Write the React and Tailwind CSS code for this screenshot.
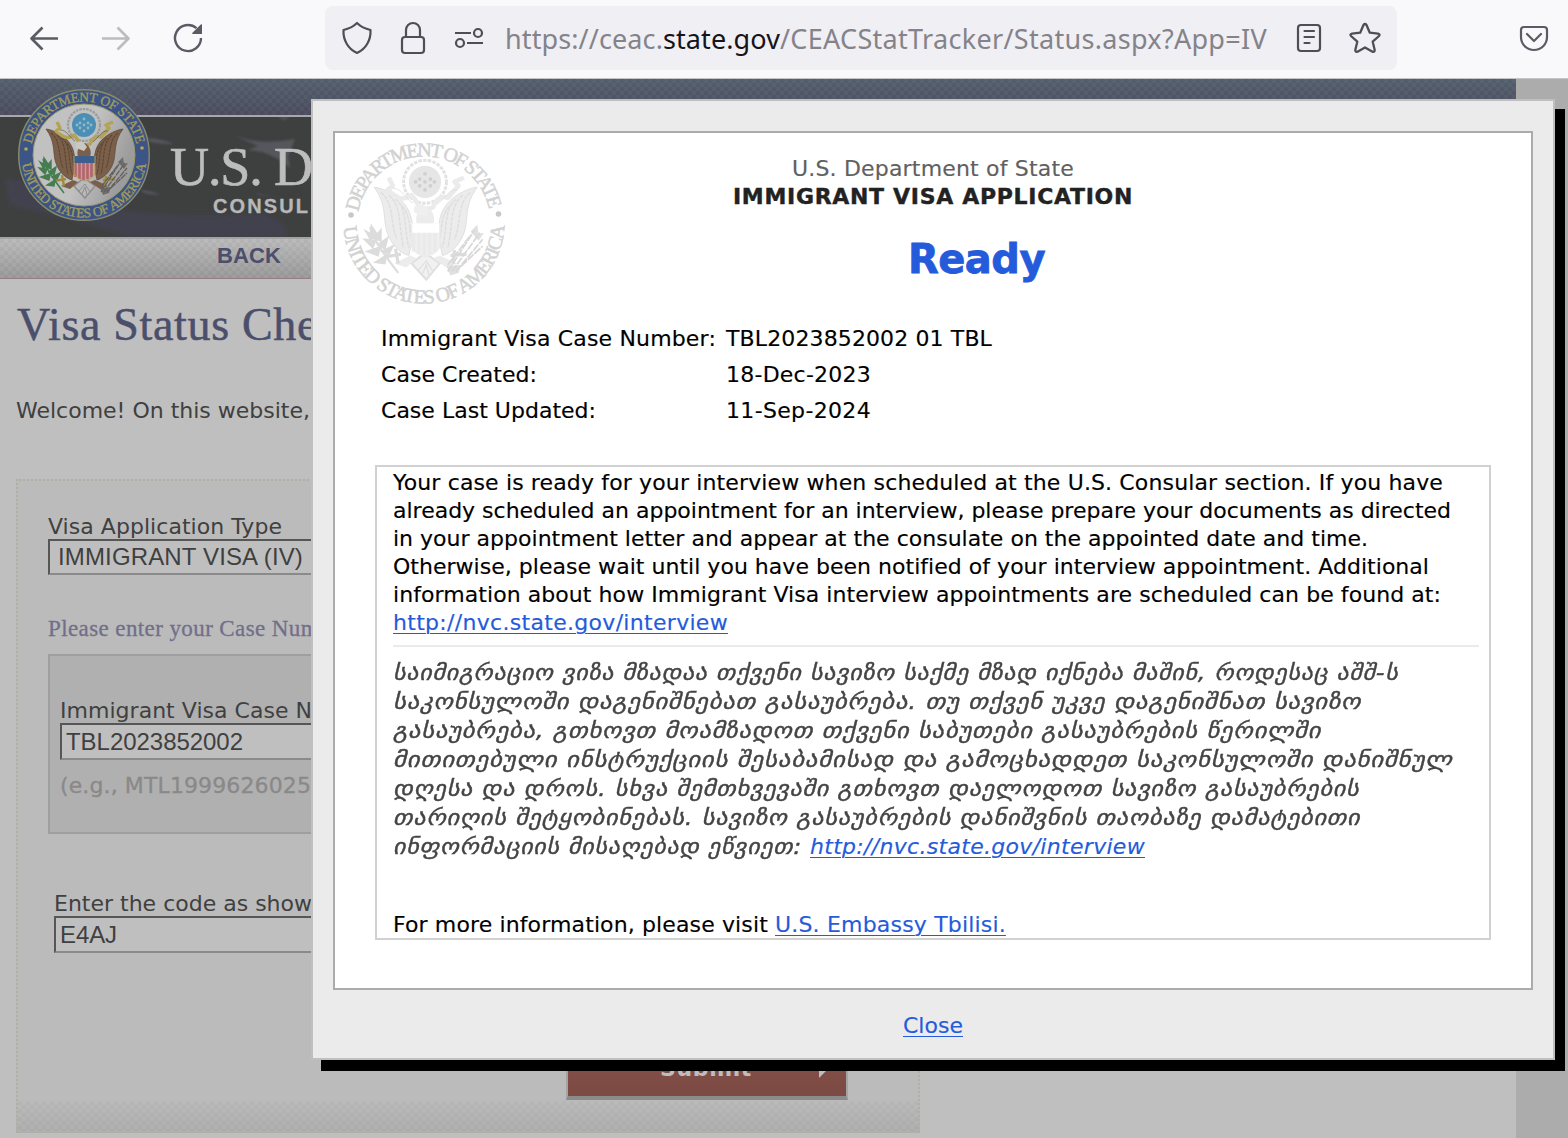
import { useLayoutEffect, useRef, useState } from "react";

// A single line of text whose tracking is adjusted to fill a given width.
function Fit({ w, children, className = "" }) {
  const ref = useRef(null);
  const [spacing, setSpacing] = useState(0);
  useLayoutEffect(() => {
    const natural = ref.current.getBoundingClientRect().width;
    setSpacing((w - natural) / ref.current.textContent.length);
  }, [w]);
  return (
    <span ref={ref} className={"inline-block whitespace-pre " + className} style={{ letterSpacing: spacing + "px" }}>
      {children}
    </span>
  );
}

// A single line whose glyphs are widened to fill a given width.
function Stretch({ w, children }) {
  const ref = useRef(null);
  const [scale, setScale] = useState(1);
  useLayoutEffect(() => {
    setScale(w / ref.current.offsetWidth);
  }, [w]);
  return (
    <span ref={ref} className="inline-block origin-left whitespace-pre tracking-[0.6px] [-webkit-text-stroke:0.4px_#444]" style={{ transform: `scaleX(${scale})` }}>
      {children}
    </span>
  );
}

const COLOR = {
  wing: "#7b5f49", wingLine: "#5b4737", glory: "#4c8fb5", star: "#8fb9c9", cloud: "#9a9c9d", scroll: "#b3a354",
  chief: "#3c5f8f", stripeA: "#b5646b", stripeB: "#c3a0a0", tail: "#b9b9b9", tailLine: "#8e8e8e",
  olive: "#467d50", arrow: "#62605f", head: "#c9c8c2", leg: "#a08a3c",
};
const GRAY = {
  wing: "#ececec", wingLine: "#dedede", glory: "#e6e6e6", star: "#cfcfcf", cloud: "#e2e2e2", scroll: "#ebebeb",
  chief: "#ffffff", stripeA: "#eaeaea", stripeB: "#efefef", tail: "#f1f1f1", tailLine: "#e0e0e0",
  olive: "#dcdcdc", arrow: "#d8d8d8", head: "#efefef", leg: "#dcdcdc",
};

function Wing({ c }) {
  return (
    <g>
      <path d="M-38-26C-30-25-18-19-13-10C-10-5-9 2-9 10L-12 25C-20 23-27 14-29 5C-31-4-29-14-38-26Z" fill={c.wing} stroke={c.wingLine} strokeWidth=".7" />
      <path d="M-33-22C-23-15-26 2-21 13M-27-20C-17-12-20 3-16 19M-22-17C-13-10-16 4-12 19M-17-12C-10-3-12 6-10 12" fill="none" stroke={c.wingLine} strokeWidth="1.1" strokeDasharray="3 .7" />
    </g>
  );
}

function Eagle({ c }) {
  const stars = [[0, -30], [-4, -32], [4, -32], [-4, -27], [4, -27], [0, -36], [0, -24], [-7, -30], [7, -30]];
  return (
    <g>
      <path d="M-10 31L0 23L11 31L1 43Z" fill={c.tail} stroke={c.tailLine} strokeWidth="1.5" />
      <path d="M-5 36L1 29L6 37M-2 39L1 32L3 40" fill="none" stroke={c.tailLine} strokeWidth="1" />
      <circle cy="-30" r="16" fill="none" stroke={c.cloud} strokeWidth="2.2" strokeDasharray="2.6 .9" />
      <circle cy="-30" r="12" fill={c.glory} />
      {stars.map(([x, y], i) => <circle key={i} cx={x} cy={y} r="1.4" fill={c.star} />)}
      <Wing c={c} />
      <g transform="translate(1 0) scale(-1 1)"><Wing c={c} /></g>
      <path d="M-27-33L-24-27L-28-24C-21-18-17-15-10-20C-5-15-5-10-1-9L6-11C8-17 13-20 17-18L25-27L22-30L29-33" fill="none" stroke={c.scroll} strokeWidth="3.4" strokeLinejoin="round" />
      <path d="M-24-25C-18-26-13-16-9-14M24-24C18-25 14-17 9-13" fill="none" stroke={c.wingLine} strokeWidth=".6" />
      <path d="M-11 25L-23 31L-14 34L-6 27M11 25L24 31L16 34L6 27" fill={c.wing} />
      <path d="M-6 2C-8-4-5-11 1-12C6-9 8-3 6 2Z" fill={c.wing} />
      <path d="M-8-7C-10-13-4-15 0-12L3-8L0-4Z" fill={c.head} />
      <path d="M-10 1H11V17Q10 23 .5 26Q-9 23-10 17Z" fill={c.stripeB} />
      <path d="M-8.500 8V22M-4.500 8V24M-.5 8V25M3.500 8V24M7.500 8V22" stroke={c.stripeA} strokeWidth="2.600" />
      <path d="M-10 1H11V8H-10Z" fill={c.chief} />
      <path d="M-10 1V18Q-9 23 .5 26Q10 23 11 18V1" fill="none" stroke={c.scroll} strokeWidth=".9" />
      <path d="M-30 26L-18 24M-22 20L-20 31M31 24L19 25M22 21L21 31" stroke={c.leg} strokeWidth="2.4" />
      <path d="M-41 4C-38 14-30 25-20 38" stroke={c.olive} strokeWidth="1.6" fill="none" />
      <path d="M-40 3L-36 9L-41 12ZM-33 6L-33 14L-38 12ZM-45 13L-37 14L-39 19ZM-28 12L-30 20L-35 17ZM-43 22L-34 19L-35 25ZM-24 18L-27 24L-32 22ZM-37 30L-29 25L-30 31ZM-44 7L-39 10L-40 14Z" fill={c.olive} stroke={c.olive} strokeWidth="1.4" />
      <path d="M17 37L37 6M20 37L41 8M23 37L43 13M27 33L43 18M17 32L34 10" stroke={c.arrow} strokeWidth="1.3" strokeDasharray="6 .8" />
      <path d="M16 33L27 32L25 38L19 40ZM34 7L39 2L40 9L44 8L40 14Z" fill={c.arrow} opacity=".8" />
    </g>
  );
}

function ColorSeal() {
  return (
    <svg viewBox="-67 -67 134 134" className="h-[134px] w-[134px]">
      <defs>
        <linearGradient id="disc" x1="0" y1="0" x2="1" y2=".35">
          <stop offset=".6" stopColor="#c1c1c1" /><stop offset="1" stopColor="#9c9c9c" />
        </linearGradient>
        <path id="ct" d="M-53.500 0A53.500 53.500 0 0 1 53.500 0" />
        <path id="cb" d="M-62.500 0A62.500 62.500 0 0 0 62.500 0" />
      </defs>
      <circle r="65.300" fill="#3c5586" stroke="#8a8c6c" strokeWidth="1.4" />
      <circle r="51" fill="url(#disc)" stroke="#9a9669" strokeWidth="1" />
      <g fill="#a09b5c" stroke="#a09b5c" strokeWidth=".35" fontSize="13.500" className="font-['Liberation_Serif',serif]">
        <text><textPath href="#ct" startOffset="11" textLength="146">DEPARTMENT OF STATE</textPath></text>
        <text><textPath href="#cb" startOffset="9" textLength="178">UNITED STATES OF AMERICA</textPath></text>
      </g>
      <circle cx="-58" cy="-6" r="1.8" fill="#b3a858" /><circle cx="58" cy="-7" r="1.8" fill="#b3a858" />
      <Eagle c={COLOR} />
    </svg>
  );
}

function GraySeal() {
  return (
    <svg viewBox="-84 -84 168 168" className="h-[168px] w-[168px]">
      <defs>
        <path id="gt" d="M-66.500 0A66.500 66.500 0 0 1 66.500 0" />
        <path id="gb" d="M-80.500 0A80.500 80.500 0 0 0 80.500 0" />
      </defs>
      <g fill="#d2d2d2" stroke="#d2d2d2" strokeWidth=".5" fontSize="20" className="font-['Liberation_Serif',serif]">
        <text><textPath href="#gt" startOffset="11" textLength="184">DEPARTMENT OF STATE</textPath></text>
        <text><textPath href="#gb" startOffset="4" textLength="246">UNITED STATES OF AMERICA</textPath></text>
      </g>
      <circle cx="-73" cy="-8" r="2.8" fill="#c8c8c8" /><circle cx="74.500" cy="-9" r="2.8" fill="#c8c8c8" />
      <g transform="translate(1 -1) scale(1.34)"><Eagle c={GRAY} /></g>
    </svg>
  );
}

function Toolbar() {
  const s = { fill: "none", stroke: "#5b5b66", strokeWidth: 2.7 };
  const d = { fill: "none", stroke: "#4f4e55", strokeWidth: 2.2, strokeLinecap: "round", strokeLinejoin: "round" };
  return (
    <header className="flex h-[79px] items-center border-b border-[#c4c4c8] bg-[#f9f9fb] pb-[2px]">
      <svg className="ml-[28px] h-8 w-8" viewBox="28 22 32 32"><path {...s} d="M58 38.500H31.500M42.500 27.500L31.500 38.500L42.500 49.500" strokeLinejoin="round" /></svg>
      <svg className="ml-[40px] h-8 w-8" viewBox="100 22 32 32"><path {...s} stroke="#bcbbc0" d="M102 38.500H128.500M117.500 27.500L128.500 38.500L117.500 49.500" strokeLinejoin="round" /></svg>
      <svg className="ml-[40px] h-8 w-8" viewBox="172 22 32 32">
        <path {...s} strokeWidth="2.400" d="M201 38A13 13 0 1 1 196.500 28.200" /><path d="M202 24.500V34H193C192 34 192 33 192.700 32.400L200.500 24.700C201 24.200 202 24 202 24.500Z" fill="#5b5b66" />
      </svg>
      <div className="ml-[121px] flex h-16 w-[1072px] items-center rounded-lg bg-[#f0eff4]">
        <svg className="ml-[16px] h-9 w-8" viewBox="341 20 32 36"><path {...d} d="M357 23C361 27 366 29 370.500 30C371 40 366 49 357 53C348 49 343 40 343.500 30C348 29 353 27 357 23Z" /></svg>
        <svg className="ml-[24px] h-9 w-8" viewBox="397 20 32 36"><rect {...d} x="402" y="37" width="22" height="16" rx="3" /><path {...d} d="M406 37V30A7 7 0 0 1 420 30V37" /></svg>
        <svg className="ml-[24px] h-9 w-8" viewBox="453 20 32 36"><path {...d} strokeLinecap="butt" d="M455 33H471M467 43H483" /><circle {...d} cx="478" cy="33" r="4" /><circle {...d} cx="460" cy="43" r="4" /></svg>
        <div className="relative top-px ml-[20px] flex w-[762px] font-['Noto_Sans',sans-serif] text-[27px] leading-9 text-[#84838a]">
          <Fit w={158}>https://ceac.</Fit><Fit w={117} className="text-[#15141a]">state.gov</Fit><Fit w={487}>/CEACStatTracker/Status.aspx?App=IV</Fit>
        </div>
        <svg className="ml-[26px] h-9 w-8" viewBox="1293 20 32 36"><rect {...d} x="1298" y="25" width="22" height="26" rx="3" /><path {...d} d="M1304.500 31H1314M1304.500 37H1314M1304.500 43H1309.500" /></svg>
        <svg className="ml-[22px] h-9 w-9" viewBox="1347 20 36 36"><path {...d} strokeWidth="2.3" d="M1363.500 25Q1365 23 1366.500 25L1369.800 32.700L1378 33.600Q1380.500 34.300 1379 36L1372.700 41.700L1374.700 50Q1374.700 52.500 1372.500 51.700L1365 47.400L1357.500 51.700Q1355.300 52.500 1355.300 50L1357.300 41.700L1351 36Q1349.500 34.300 1352 33.600L1360.200 32.700Z" /></svg>
      </div>
      <svg className="ml-[121px] h-9 w-8" viewBox="1518 20 32 36"><path {...s} strokeWidth="2.2" strokeLinejoin="round" strokeLinecap="round" d="M1524 27H1544Q1547 27 1547 30V37A13 13 0 0 1 1521 37V30Q1521 27 1524 27ZM1527 34L1534 41L1541 34" /></svg>
    </header>
  );
}

const FIELD = "flex items-center overflow-hidden border-2 border-t-[#565656] border-l-[#565656] border-b-[#8a8a8a] border-r-[#8a8a8a] bg-[#bfbfbf] font-['Liberation_Sans',sans-serif] text-[24px] leading-7";

function Page() {
  return (
    <main className="flex h-[1059px] bg-[#acacac]">
      <div className="w-[1516px] overflow-hidden bg-[#bfbfbf] font-['DejaVu_Sans',sans-serif] text-[22px] leading-[28px] text-[#404040]">
        <div className="h-[36px] bg-[repeating-conic-gradient(#0000_0_25%,#ffffff09_0_50%),linear-gradient(#535f6c,#4a4b5d)] bg-[size:8px_8px,100%_100%]" />
        <div className="h-[2px] bg-[#a6a8ac]" />
        <div className="relative flex h-[120px] items-start bg-[#3e4040]">
          <svg className="absolute left-0 top-0 h-[120px] w-[312px]" viewBox="0 117 312 120">
            <defs><filter id="soft"><feGaussianBlur stdDeviation="2" /></filter><filter id="soft1"><feGaussianBlur stdDeviation=".8" /></filter></defs>
            <path d="M5 178Q60 190 110 208Q170 220 260 214Q290 222 285 236H130Q60 215 10 205Z" fill="#42424f" filter="url(#soft)" />
            <path d="M148 138Q162 139 174 144Q160 144 150 142ZM142 190Q153 191 160 195Q150 195 142 192ZM233 135Q260 146 295 139L288 156L290 168Q280 158 262 152L248 150L258 146ZM245 188Q270 202 305 192Q280 199 260 195ZM278 117H290L284 120Z" fill="#5e5e66" opacity=".75" filter="url(#soft1)" />
          </svg>
          <div className="relative -mt-[29px] ml-[17px] h-[134px]"><ColorSeal /></div>
          <div className="relative ml-[19px] mt-[22px] whitespace-nowrap">
            <div className="h-[56px] font-['Liberation_Serif',serif] text-[54px] leading-[56px] text-[#bdbdbd] [-webkit-text-stroke:0.7px_#bdbdbd]"><Fit w={142}>U.S. D</Fit></div>
            <div className="ml-[43px] h-[24px] font-['Liberation_Sans',sans-serif] text-[20px] font-bold leading-[22px] text-[#b8b8b8] [-webkit-text-stroke:0.3px_#b8b8b8]"><Fit w={97}>CONSUL</Fit></div>
          </div>
        </div>
        <div className="h-[42px] border-t-2 border-b border-t-[#a3a3a3] border-b-[#967f82] bg-[repeating-conic-gradient(#0000_0_25%,#00000009_0_50%),linear-gradient(#bcbcbc,#9c9c9c)] bg-[size:8px_8px,100%_100%] pl-[217px] pt-[3px] font-['Liberation_Sans',sans-serif] text-[22px] font-bold text-[#4c4f6b]">
          <Fit w={64}>BACK</Fit>
        </div>
        <h1 className="mt-[16px] h-[60px] pl-[17px] font-['Liberation_Serif',serif] text-[46px] leading-[60px] text-[#4c4f6b] [-webkit-text-stroke:0.5px_#4c4f6b]"><Fit w={301}>Visa Status Che</Fit></h1>
        <p className="mt-[42px] h-[28px] pl-[16px]"><Fit w={294}>Welcome! On this website,</Fit></p>
        <section className="ml-[16px] mt-[54px] flex h-[654px] w-[904px] flex-col border-2 border-dotted border-[#b1aea5] bg-[linear-gradient(#bbbbbb,#bbbbbb_95%,#afafaf)] bg-no-repeat bg-origin-border">
          <div className="flex h-[620px] flex-col pl-[30px]">
            <label className="mt-[32px] h-[26px]"><Fit w={234}>Visa Application Type</Fit></label>
            <div className={"h-[36px] w-[500px] shrink-0 pl-[8px] " + FIELD}><Fit w={245}>IMMIGRANT VISA (IV)</Fit></div>
            <h2 className="mt-[40px] h-[28px] shrink-0 font-['Liberation_Serif',serif] text-[23px] text-[#716f8a] [-webkit-text-stroke:0.3px_#716f8a]"><Fit w={271}>Please enter your Case Num</Fit></h2>
            <div className="mt-[11px] h-[180px] w-[820px] shrink-0 border-2 border-[#9f9f9f] bg-[#b0b0b0] pl-[10px] pt-[41px]">
              <div className="h-[26px]"><Fit w={252}>Immigrant Visa Case N</Fit></div>
              <div className={"h-[37px] w-[500px] pl-[4px] " + FIELD}><Fit w={177}>TBL2023852002</Fit></div>
              <div className="mt-[12px] text-[#898989] [-webkit-text-stroke:0.3px_#898989]"><Fit w={251}>(e.g., MTL1999626025</Fit></div>
            </div>
            <div className="ml-[6px] mt-[56px] h-[26px] shrink-0"><Fit w={258}>Enter the code as show</Fit></div>
            <div className={"ml-[6px] h-[37px] w-[500px] shrink-0 pl-[4px] " + FIELD}><Fit w={57}>E4AJ</Fit></div>
            <button className="ml-[518px] mt-[90px] flex h-[57px] w-[282px] shrink-0 items-center justify-center gap-[64px] border-2 border-b-4 border-[#a4a4a4] border-b-[#8b8b8b] bg-[linear-gradient(#86504d,#7b4a42)] pb-[4px] pl-[76px] text-[22px] font-bold text-[#bebebe]">
              <Fit w={92}>Submit</Fit>
              <svg viewBox="0 0 14 20" className="h-5 w-[14px]"><path d="M3 2L13 9L3 19Z" fill="#bebebe" /></svg>
            </button>
          </div>
          <div className="h-[30px] bg-[repeating-conic-gradient(#0000_0_25%,#00000007_0_50%)] bg-[size:8px_8px]" />
        </section>
      </div>
    </main>
  );
}

const ENGLISH = [
  [1050, "Your case is ready for your interview when scheduled at the U.S. Consular section. If you have"],
  [1058, "already scheduled an appointment for an interview, please prepare your documents as directed"],
  [975, "in your appointment letter and appear at the consulate on the appointed date and time."],
  [1036, "Otherwise, please wait until you have been notified of your interview appointment. Additional"],
  [1048, "information about how Immigrant Visa interview appointments are scheduled can be found at:"],
];
const GEORGIAN = [
  [1006, "საიმიგრაციო ვიზა მზადაა თქვენი სავიზო საქმე მზად იქნება მაშინ, როდესაც აშშ-ს"],
  [968, "საკონსულოში დაგენიშნებათ გასაუბრება. თუ თქვენ უკვე დაგენიშნათ სავიზო"],
  [928, "გასაუბრება, გთხოვთ მოამზადოთ თქვენი საბუთები გასაუბრების წერილში"],
  [1059, "მითითებული ინსტრუქციის შესაბამისად და გამოცხადდეთ საკონსულოში დანიშნულ"],
  [967, "დღესა და დროს. სხვა შემთხვევაში გთხოვთ დაელოდოთ სავიზო გასაუბრების"],
  [968, "თარიღის შეტყობინებას. სავიზო გასაუბრების დანიშვნის თაობაზე დამატებითი"],
];
const LINK = "text-[#245bdb] underline decoration-1 underline-offset-[3px]";

function Dialog() {
  return (
    <div className="absolute left-[311px] top-[99px] h-[961px] w-[1244px] border-2 border-[#bfbfbf] bg-[#ebebeb] p-5 pt-[30px] font-['DejaVu_Sans',sans-serif] text-[22px] leading-[28px] text-black shadow-[10px_11px_0_0_#000,10px_10px_0_0_#000] [-webkit-text-stroke-width:0.15px]">
      <div className="relative h-[859px] w-[1200px] border-2 border-[#ababab] bg-white">
        <div className="absolute left-[5px] top-[6px]"><GraySeal /></div>
        <div className="flex h-[78px] flex-col items-center pt-[22px]">
          <Fit w={282} className="text-[#606060]">U.S. Department of State</Fit>
          <Fit w={400} className="font-bold text-[#222] [-webkit-text-stroke-width:0.4px]">IMMIGRANT VISA APPLICATION</Fit>
        </div>
        <div className="mt-[22px] h-[54px] pl-[573px] text-[40px] font-bold leading-[53px] text-[#245bdb] [-webkit-text-stroke-width:0.8px]"><Fit w={137}>Ready</Fit></div>
        <div className="mt-[34px] grid grid-cols-[345px_1fr] pl-[46px] leading-[36px]">
          <span><Fit w={335}>Immigrant Visa Case Number:</Fit></span><span><Fit w={266}>TBL2023852002 01 TBL</Fit></span>
          <span><Fit w={156}>Case Created:</Fit></span><span><Fit w={145}>18-Dec-2023</Fit></span>
          <span><Fit w={215}>Case Last Updated:</Fit></span><span><Fit w={145}>11-Sep-2024</Fit></span>
        </div>
        <div className="ml-[40px] mt-[36px] h-[475px] w-[1116px] border-2 border-[#d1d1d1] pl-4 pr-[10px] pt-[2px]">
          {ENGLISH.map(([w, t]) => <div key={t} className="h-[28px]"><Fit w={w}>{t}</Fit></div>)}
          <div className="h-[28px]"><Fit w={335} className={LINK}>http://nvc.state.gov/interview</Fit></div>
          <div className="mt-[8px] h-[2px] bg-[#ebebeb]" />
          <div className="mt-[11px] italic leading-[29px] text-[#444]">
            {GEORGIAN.map(([w, t]) => <div key={t} className="h-[29px]"><Stretch w={w}>{t}</Stretch></div>)}
            <div className="flex h-[29px]"><div className="w-[417px]"><Stretch w={417}>{"ინფორმაციის მისაღებად ეწვიეთ: "}</Stretch></div><Fit w={335} className={LINK}>http://nvc.state.gov/interview</Fit></div>
          </div>
          <div className="mt-[50px] flex h-[28px]"><Fit w={382}>{"For more information, please visit "}</Fit><Fit w={231} className={LINK}>U.S. Embassy Tbilisi.</Fit></div>
        </div>
      </div>
      <div className="mt-[22px] text-center"><Fit w={60} className={LINK}>Close</Fit></div>
    </div>
  );
}

export default function App() {
  return (
    <div className="relative h-[1138px] w-[1568px] overflow-hidden">
      <Toolbar />
      <Page />
      <Dialog />
    </div>
  );
}
